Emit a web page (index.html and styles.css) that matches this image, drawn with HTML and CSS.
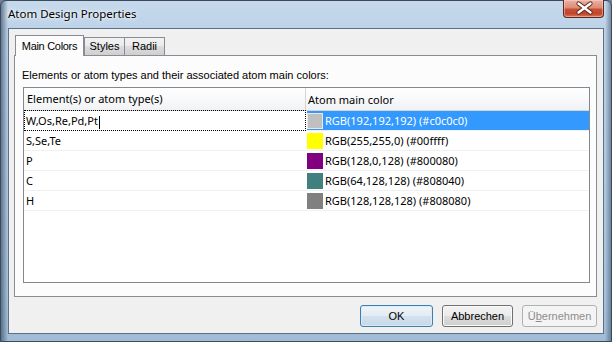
FILE: index.html
```html
<!DOCTYPE html>
<html lang="de">
<head>
  <meta charset="UTF-8" />
  <title>Atom Design Properties</title>
  <link rel="stylesheet" href="styles.css">
</head>
<body>

<div class="window">
  <div class="titlebar">
    <span class="title">Atom Design Properties</span>
    <div class="close">
      <svg width="41" height="18" viewBox="0 0 41 18">
        <path d="M14.5 4.5 L26.5 13.5 M26.5 4.5 L14.5 13.5" stroke="#5a2418" stroke-width="4.2" stroke-linecap="round" fill="none"/>
        <path d="M14.5 4.5 L26.5 13.5 M26.5 4.5 L14.5 13.5" stroke="#fff" stroke-width="2.4" stroke-linecap="round" fill="none"/>
      </svg>
    </div>
  </div>

  <div class="client">
    <div class="tabs">
      <div class="tab active">Main Colors</div>
      <div class="tab styles">Styles</div>
      <div class="tab radii">Radii</div>
    </div>

    <div class="panel">
      <p class="label">Elements or atom types and their associated atom main colors:</p>
      <div class="list">
        <div class="row head">
          <div class="cell c1">Element(s) or atom type(s)</div>
          <div class="cell c2">Atom main color</div>
        </div>
        <div class="row selected">
          <div class="cell c1 editing">W,Os,Re,Pd,Pt<span class="caret"></span></div>
          <div class="cell c2"><span class="swatch" style="background:#c0c0c0"></span>RGB(192,192,192) (#c0c0c0)</div>
        </div>
        <div class="row">
          <div class="cell c1">S,Se,Te</div>
          <div class="cell c2"><span class="swatch" style="background:#ffff00"></span>RGB(255,255,0) (#00ffff)</div>
        </div>
        <div class="row">
          <div class="cell c1">P</div>
          <div class="cell c2"><span class="swatch" style="background:#800080"></span>RGB(128,0,128) (#800080)</div>
        </div>
        <div class="row">
          <div class="cell c1">C</div>
          <div class="cell c2"><span class="swatch" style="background:#408080"></span>RGB(64,128,128) (#808040)</div>
        </div>
        <div class="row">
          <div class="cell c1">H</div>
          <div class="cell c2"><span class="swatch" style="background:#808080"></span>RGB(128,128,128) (#808080)</div>
        </div>
      </div>
    </div>

    <div class="buttons">
      <button class="btn default ok">OK</button>
      <button class="btn cancel">Abbrechen</button>
      <button class="btn apply" disabled>Ü<u>b</u>ernehmen</button>
    </div>
  </div>
</div>

</body>
</html>
```

FILE: styles.css
```css
* { box-sizing: border-box; margin: 0; padding: 0; }

body {
  width: 612px;
  height: 342px;
  overflow: hidden;
  background: #6d8196;
  font-family: 'Noto Sans', 'Open Sans', sans-serif;
  font-size: 11px;
  color: #000;
}

.window {
  width: 612px;
  height: 342px;
  border: 1px solid #3b4b5c;
  border-radius: 6px 6px 0 0;
  background:
    linear-gradient(to right, rgba(30, 50, 75, 0.55) 0, rgba(30, 50, 75, 0) 7px, rgba(30, 50, 75, 0) 604px, rgba(30, 50, 75, 0.45) 610px),
    linear-gradient(to bottom, #c6d9ec 0, #bcd2e8 30px, #a9c3dc 300px, #9fbbd6 342px);
  display: flex;
  flex-direction: column;
}

.titlebar {
  height: 27px;
  display: flex;
  justify-content: space-between;
  align-items: flex-start;
  padding: 0 7px 0 7px;
}

.title {
  margin-top: 5px;
  font-size: 11.5px;
  line-height: 16px;
  text-shadow: 0 0 6px #fff, 0 0 3px #fff;
}

.close {
  width: 41px;
  height: 18px;
  margin-top: -1px;
  border: 1px solid #5e2a20;
  border-top: none;
  border-radius: 0 0 4px 4px;
  background: linear-gradient(to bottom, #ebb2a4 0, #dc8c78 45%, #c84f33 55%, #c2452a 80%, #d8765c 100%);
  box-shadow: inset 0 0 0 1px rgba(255, 220, 210, 0.45);
}

.close svg { display: block; margin-top: -1px; }

.client {
  height: 306px;
  margin: 0 7px;
  border: 1px solid #5f7082;
  background: #f0f0f0;
  padding: 6px 6px 6px 5px;
  display: flex;
  flex-direction: column;
}

/* dialog texts use the narrower dialog font */
.label, .tab, .btn {
  font-family: 'Liberation Sans', Arial, sans-serif;
  font-size: 11px;
}

.tabs {
  height: 21px;
  display: flex;
  align-items: flex-end;
  padding-left: 1px;
  position: relative;
  z-index: 1;
}

.tab {
  height: 18px;
  margin-bottom: 1px;
  line-height: 16px;
  text-align: center;
  border: 1px solid #898c95;
  border-bottom: none;
  border-left: none;
  background: linear-gradient(to bottom, #f2f2f2 0, #ebebeb 50%, #dddddd 50%, #cfcfcf 100%);
}

.tab.styles { width: 41px; border-left: 1px solid #898c95; }
.tab.radii { width: 40px; }

.tab.active {
  width: 69px;
  height: 21px;
  margin-bottom: 0;
  padding-top: 2px;
  letter-spacing: -0.3px;
  border-left: 1px solid #898c95;
  background: #fcfcfc;
}

.panel {
  height: 242px;
  margin-top: -1px;
  border: 1px solid #898c95;
  background: #fcfcfc;
  padding: 11px 6px 0 8px;
}

.label {
  line-height: 16px;
  margin-left: -1px;
}

.list {
  height: 196px;
  margin-top: 4px;
  border: 1px solid #828790;
  background: #fff;
}

.row {
  display: flex;
  height: 20px;
  border-bottom: 1px solid #f0f0f0;
}

.cell {
  line-height: 19px;
  white-space: nowrap;
}

.c1 { width: 282px; padding-left: 2px; }
.c2 { flex: 1; display: flex; align-items: center; }

.row.head {
  height: 23px;
  background: linear-gradient(to bottom, #ffffff 0, #f8f9fa 50%, #f1f2f4 100%);
  border-bottom: 1px solid #d5d5d5;
}

.head .cell { line-height: 21px; }
.head .c1 { padding-left: 3px; border-right: 1px solid #d5d5d5; }
.head .c2 { padding-left: 2px; }

.row .c2 { margin-left: 1px; }
.head .c2 { margin-left: 0; }

.swatch {
  width: 16px;
  height: 16px;
  margin: 0 2px 0 0;
  flex: none;
}

.selected .c2 {
  background: #3399ff;
  color: #fff;
}

.selected .swatch { border: 1px solid #e8e8e8; }

.editing {
  outline: 1px dotted #000;
  outline-offset: -1px;
  margin-top: -1px;
  height: 21px;
  line-height: 21px;
}

.caret {
  display: inline-block;
  vertical-align: middle;
  width: 1px;
  height: 13px;
  margin-left: 1px;
  background: #000;
}

.buttons {
  margin-top: 8px;
  display: flex;
  justify-content: flex-end;
  gap: 8px;
}

.btn {
  height: 22px;
  color: #000;
  border: 1px solid #707070;
  border-radius: 3px;
  background: linear-gradient(to bottom, #f2f2f2 0, #ebebeb 50%, #dddddd 50%, #cfcfcf 100%);
  box-shadow: inset 0 0 0 1px #fbfbfb;
}

.ok { width: 73px; margin-right: 1px; }
.cancel { width: 71px; margin-right: 1px; }
.apply { width: 75px; }

.btn.default {
  border-color: #3c7fb1;
  background: linear-gradient(to bottom, #eef4f9 0, #e3ecf4 50%, #d4e2ee 50%, #c6d8e8 100%);
  box-shadow: inset 0 0 0 1px #d9ecf8;
}

.btn:disabled {
  color: #8d8d8d;
  border-color: #adb2b5;
  background: #f4f4f4;
  box-shadow: none;
}
```
